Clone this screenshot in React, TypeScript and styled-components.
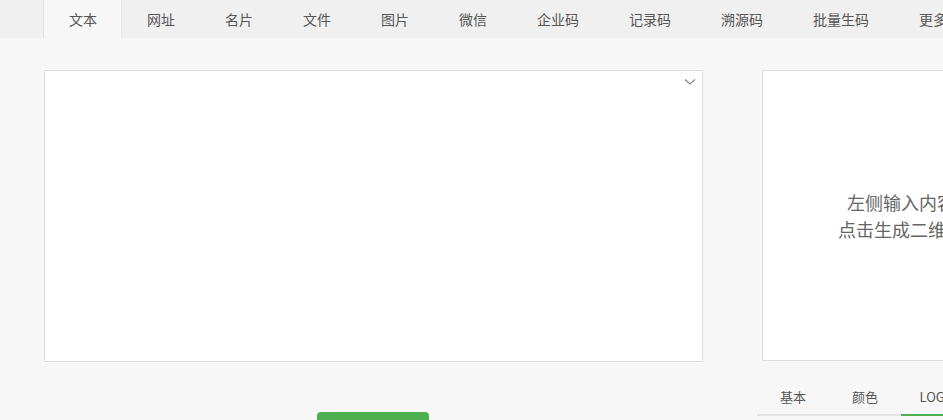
import React from "react";
import styled, { createGlobalStyle } from "styled-components";

const Global = createGlobalStyle`
  html, body { margin: 0; padding: 0; background: #f7f7f7; }
  body { font-family: "Microsoft YaHei", "Noto Sans CJK SC", "Noto Sans", sans-serif; color: #555; overflow: hidden; }
  * { box-sizing: border-box; }
`;

const Page = styled.div`
  width: 943px;
  height: 420px;
  overflow: hidden;
  background: #f7f7f7;
`;

const NavBar = styled.nav`
  height: 38px;
  background: #f0f0f0;
  display: flex;
  padding-left: 43px;
  white-space: nowrap;
  overflow: hidden;
`;

const NavTab = styled.div<{ $active?: boolean }>`
  flex: none;
  height: 38px;
  padding: ${(p) => (p.$active ? "0 24px 0 25px" : "0 25px")};
  display: flex;
  align-items: center;
  font-size: 14px;
  color: #555;
  background: ${(p) => (p.$active ? "#f7f7f7" : "transparent")};
  border-left: ${(p) => (p.$active ? "1px solid #e2e2e2" : "none")};
  border-right: ${(p) => (p.$active ? "1px solid #e8e8e8" : "none")};
`;

const Main = styled.div`
  display: flex;
  gap: 54px;
  padding: 32px 0 0 44px;
`;

const LeftCol = styled.div`
  flex: none;
  width: 659px;
  display: flex;
  flex-direction: column;
  align-items: center;
`;

const TextBox = styled.div`
  position: relative;
  width: 659px;
  height: 292px;
  background: #fff;
  border: 1px solid #dedede;
`;

const Chevron = styled.svg`
  position: absolute;
  top: 7px;
  right: 6px;
`;

const GenButton = styled.button`
  margin-top: 50px;
  margin-right: 2px;
  width: 112px;
  height: 40px;
  border: none;
  border-radius: 4px;
  background: #4caf50;
  color: #fff;
  font-size: 15px;
  font-family: inherit;
`;

const RightCol = styled.div`
  flex: none;
  width: 300px;
  display: flex;
  flex-direction: column;
`;

const Preview = styled.div`
  margin-left: 5px;
  width: 278px;
  height: 291px;
  background: #fff;
  border: 1px solid #dedede;
  display: flex;
  flex-direction: column;
  align-items: center;
  justify-content: center;
  font-size: 18px;
  line-height: 27px;
  color: #666;
  text-align: center;
`;

const SubTabs = styled.div`
  margin-top: 18px;
  display: flex;
  border-bottom: 2px solid #e4e4e4;
  white-space: nowrap;
`;

const SubTab = styled.div<{ $active?: boolean }>`
  flex: none;
  width: 72px;
  height: 37px;
  display: flex;
  align-items: center;
  justify-content: center;
  font-size: 13px;
  color: #555;
  margin-bottom: -2px;
  border-bottom: 2px solid ${(p) => (p.$active ? "#4caf50" : "transparent")};
`;

const tabs = ["文本", "网址", "名片", "文件", "图片", "微信", "企业码", "记录码", "溯源码", "批量生码", "更多"];

export default function App() {
  return (
    <Page>
      <Global />
      <NavBar>
        {tabs.map((t, i) => (
          <NavTab key={t} $active={i === 0}>
            {t}
          </NavTab>
        ))}
      </NavBar>
      <Main>
        <LeftCol>
          <TextBox>
            <Chevron width="12" height="8" viewBox="0 0 12 8">
              <path d="M1 1.5 L6 6 L11 1.5" fill="none" stroke="#8a8a8a" strokeWidth="1.3" />
            </Chevron>
          </TextBox>
          <GenButton>生成二维码</GenButton>
        </LeftCol>
        <RightCol>
          <Preview>
            <div>左侧输入内容</div>
            <div>点击生成二维码</div>
          </Preview>
          <SubTabs>
            <SubTab>基本</SubTab>
            <SubTab>颜色</SubTab>
            <SubTab $active>LOGO</SubTab>
            <SubTab>其他</SubTab>
          </SubTabs>
        </RightCol>
      </Main>
    </Page>
  );
}
